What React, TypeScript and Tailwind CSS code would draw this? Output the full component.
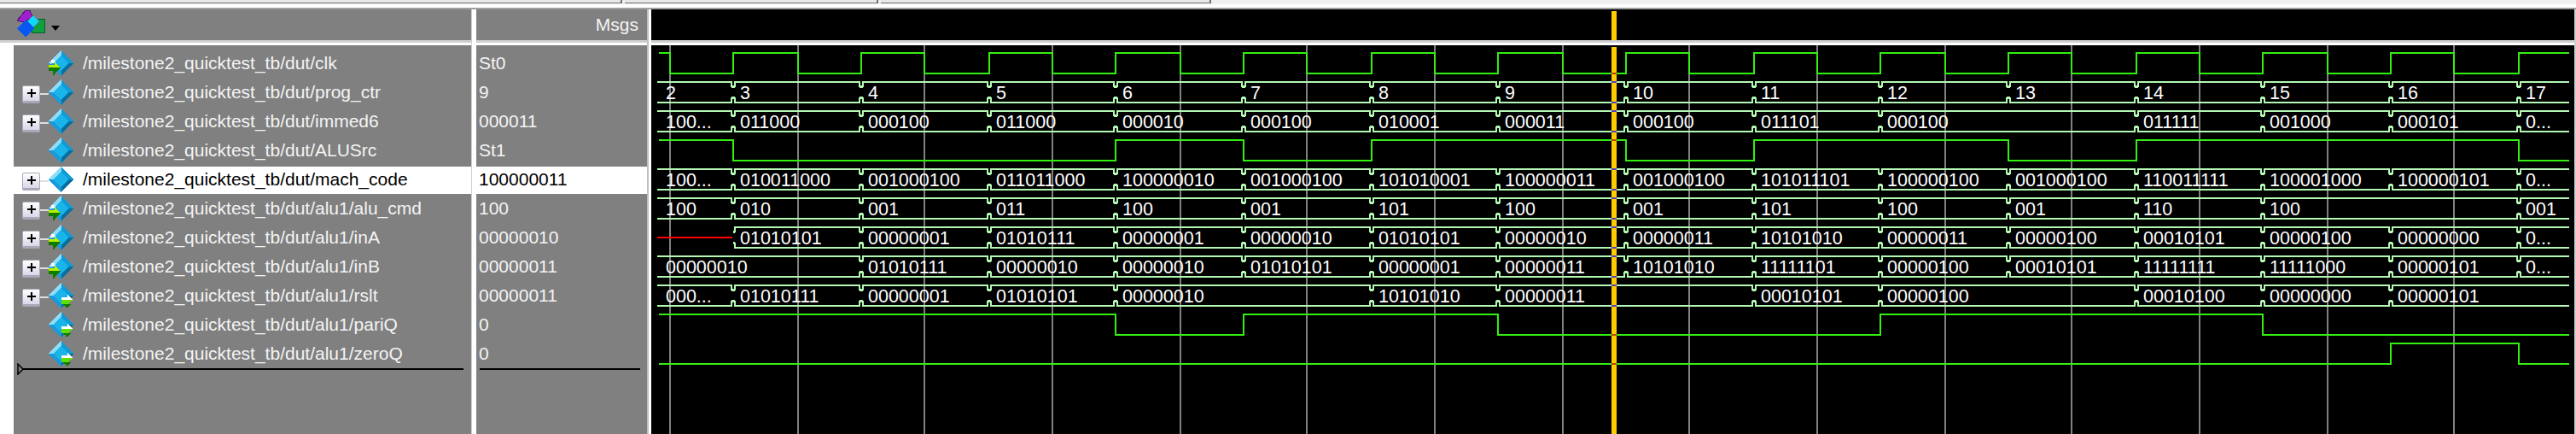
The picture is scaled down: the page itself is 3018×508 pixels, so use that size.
const edges = [770, 859, 1009, 1159, 1307, 1457, 1607, 1755, 1905, 2055, 2203, 2353, 2503, 2651, 2801, 2951, 3010];
const gridLines = [785, 935, 1083, 1233, 1383, 1531, 1681, 1831, 1979, 2129, 2279, 2427, 2577, 2727, 2875];
const rising = [859, 1009, 1159, 1307, 1457, 1607, 1755, 1905, 2055, 2203, 2353, 2503, 2651, 2801, 2951];

type Arrow = 'in' | 'out' | undefined;

interface Signal {
  name: string;
  value: string;
  expand?: boolean;
  arrow?: Arrow;
  selected?: boolean;
}

const signals: Signal[] = [
  { name: '/milestone2_quicktest_tb/dut/clk', value: 'St0', arrow: 'in' },
  { name: '/milestone2_quicktest_tb/dut/prog_ctr', value: '9', expand: true },
  { name: '/milestone2_quicktest_tb/dut/immed6', value: '000011', expand: true },
  { name: '/milestone2_quicktest_tb/dut/ALUSrc', value: 'St1' },
  { name: '/milestone2_quicktest_tb/dut/mach_code', value: '100000011', expand: true, selected: true },
  { name: '/milestone2_quicktest_tb/dut/alu1/alu_cmd', value: '100', expand: true, arrow: 'in' },
  { name: '/milestone2_quicktest_tb/dut/alu1/inA', value: '00000010', expand: true, arrow: 'in' },
  { name: '/milestone2_quicktest_tb/dut/alu1/inB', value: '00000011', expand: true, arrow: 'in' },
  { name: '/milestone2_quicktest_tb/dut/alu1/rslt', value: '00000011', expand: true, arrow: 'out' },
  { name: '/milestone2_quicktest_tb/dut/alu1/pariQ', value: '0', arrow: 'out' },
  { name: '/milestone2_quicktest_tb/dut/alu1/zeroQ', value: '0', arrow: 'out' },
];

// one label per clock period, null = value did not change
const buses: { center: number; labels: (string | null)[]; red?: boolean }[] = [
  { center: 108, labels: ['2', '3', '4', '5', '6', '7', '8', '9', '10', '11', '12', '13', '14', '15', '16', '17'] },
  { center: 142, labels: ['100...', '011000', '000100', '011000', '000010', '000100', '010001', '000011', '000100', '011101', '000100', null, '011111', '001000', '000101', '0...'] },
  { center: 210, labels: ['100...', '010011000', '001000100', '011011000', '100000010', '001000100', '101010001', '100000011', '001000100', '101011101', '100000100', '001000100', '110011111', '100001000', '100000101', '0...'] },
  { center: 244, labels: ['100', '010', '001', '011', '100', '001', '101', '100', '001', '101', '100', '001', '110', '100', null, '001'] },
  { center: 278, red: true, labels: ['', '01010101', '00000001', '01010111', '00000001', '00000010', '01010101', '00000010', '00000011', '10101010', '00000011', '00000100', '00010101', '00000100', '00000000', '0...'] },
  { center: 312, labels: ['00000010', null, '01010111', '00000010', '00000010', '01010101', '00000001', '00000011', '10101010', '11111101', '00000100', '00010101', '11111111', '11111000', '00000101', '0...'] },
  { center: 346, labels: ['000...', '01010111', '00000001', '01010101', '00000010', null, '10101010', '00000011', null, '00010101', '00000100', null, '00010100', '00000000', '00000101', null] },
];

const clkPoints = () => {
  const pts: string[] = ['772,62', '785,62', '785,86'];
  rising.forEach((r, i) => {
    pts.push(`${r},86`, `${r},62`);
    if (gridLines[i + 1]) pts.push(`${gridLines[i + 1]},62`, `${gridLines[i + 1]},86`);
  });
  pts.push('3010,62');
  return pts.join(' ');
};

// digital traces: starts high/low, toggles at the listed x
const trace = (hi: number, lo: number, startHigh: boolean, toggles: number[]) => {
  let high = startHigh;
  const pts = [`772,${high ? hi : lo}`];
  toggles.forEach((x) => {
    pts.push(`${x},${high ? hi : lo}`);
    high = !high;
    pts.push(`${x},${high ? hi : lo}`);
  });
  pts.push(`3010,${high ? hi : lo}`);
  return pts.join(' ');
};

const digital = [
  trace(164, 188, true, [859, 1307, 1457, 1607, 1905, 2055, 2353, 2503, 2951]),
  trace(368, 392, true, [1307, 1457, 1755, 2203, 2651]),
  trace(402, 426, false, [2801, 2951]),
];

function busPath(a: number, b: number, c: number, first: boolean, last: boolean) {
  const top = c - 12;
  const bot = c + 12;
  const x0 = first ? a : a + 2;
  const x1 = last ? b : b - 2;
  let d = '';
  // top line
  d += first ? `M${x0} ${top}` : `M${a + 1} ${top + 7}V${top + 5}H${x0}V${top}`;
  d += `H${x1}`;
  if (!last) d += `V${top + 5}H${b - 1}V${top + 7}`;
  // bottom line
  d += first ? `M${x0} ${bot}` : `M${a + 1} ${bot - 7}V${bot - 5}H${x0}V${bot}`;
  d += `H${x1}`;
  if (!last) d += `V${bot - 5}H${b - 1}V${bot - 7}`;
  return d;
}

function Waves() {
  return (
    <svg viewBox="763 53 2253 455" className="block w-[2253px] h-[455px]">
      {gridLines.map((x) => (
        <rect key={x} x={x - 1} y={53} width={2} height={455} className="fill-[#808080]" />
      ))}
      <polyline points={clkPoints()} fill="none" strokeWidth={2} shapeRendering="crispEdges" className="stroke-[#33ee11]" />
      {digital.map((p, i) => (
        <polyline key={i} points={p} fill="none" strokeWidth={2} shapeRendering="crispEdges" className="stroke-[#33ee11]" />
      ))}
      {buses.map((bus) => {
        const segs: { a: number; b: number; label: string; first: boolean; last: boolean }[] = [];
        bus.labels.forEach((label, i) => {
          if (label === null) {
            segs[segs.length - 1].b = edges[i + 1];
            segs[segs.length - 1].last = i === bus.labels.length - 1;
          } else {
            segs.push({ a: edges[i], b: edges[i + 1], label, first: i === 0, last: i === bus.labels.length - 1 });
          }
        });
        return (
          <g key={bus.center}>
            {segs.map((s) =>
              bus.red && s.first ? (
                <rect key={s.a} x={770} y={bus.center - 1} width={88} height={2} className="fill-[#ff0000]" />
              ) : (
                <path key={s.a} d={busPath(s.a, s.b, bus.center, s.first, s.last)} fill="none" strokeWidth={2} shapeRendering="crispEdges" className="stroke-[#b4f8b4]" />
              )
            )}
            {segs.map((s) => (
              <text key={s.a} x={s.first ? s.a + 10 : s.a + 8} y={bus.center + 8} className="fill-white text-[21.5px]">
                {s.label}
              </text>
            ))}
          </g>
        );
      })}
      {/* cursor */}
      <rect x={1888} y={55} width={6} height={453} className="fill-[#ffcc00]" />
      {[86, 164, 392, 426].map((y) => (
        <rect key={y} x={1888} y={y - 1} width={6} height={2} className="fill-[#c83a10]" />
      ))}
      {[96, 120, 130, 154, 198, 222, 232, 256, 266, 290, 300, 324, 334, 358].map((y) => (
        <rect key={y} x={1888} y={y - 1} width={6} height={2} className="fill-[#5a3cc0]" />
      ))}
    </svg>
  );
}

function SignalIcon({ arrow }: { arrow: Arrow }) {
  return (
    <svg viewBox="0 0 29 30" className="w-[29px] h-[30px] shrink-0" shapeRendering="crispEdges">
      <polygon points="14.5,0 14.5,15 0,15" fill="#8fdcf8" />
      <polygon points="14.5,0 29,15 14.5,15" fill="#0f9ad8" />
      <polygon points="0,15 14.5,15 14.5,30" fill="#1a9ad8" />
      <polygon points="29,15 14.5,15 14.5,30" fill="#08709e" />
      <polygon points="14.5,6 23,15 14.5,24 6,15" fill="#19b4ea" />
      {arrow === 'in' && (
        <g>
          <polygon points="3,16 3,11 7,11 8,14 0,16" fill="#ffffff" />
          <polygon points="0,17 7,17 7,14 14,20 0,20" fill="#b8f000" />
          <polygon points="0,20 14,20 7,27 7,29 5,29 5,24 0,24" fill="#0f7a00" />
        </g>
      )}
      {arrow === 'out' && (
        <g>
          <polygon points="15,17 22,17 22,14 29,20 15,20" fill="#ffffff" />
          <polygon points="15,20 29,20 22,25 15,25" fill="#60e000" />
          <polygon points="18,25 26,25 22,29 20,29 20,27 18,27" fill="#0f7a00" />
        </g>
      )}
    </svg>
  );
}

function Expander() {
  return (
    <div className="relative w-[21px] h-[21px] mt-[4px] shrink-0 rounded-[2px] border border-b-[3px] border-[#a8a8b8] bg-gradient-to-b from-white to-[#d8d8e8] flex items-center justify-center">
      <div className="absolute w-[10px] h-[2px] bg-black" />
      <div className="absolute w-[2px] h-[10px] bg-black" />
    </div>
  );
}

function HeaderIcon() {
  return (
    <svg viewBox="0 0 36 34" className="w-[36px] h-[34px]" shapeRendering="crispEdges">
      <polygon points="0,12 10,0 15,0 18,8 8,14" fill="#a020d0" stroke="#501070" strokeWidth={1} />
      <rect x="17" y="10" width="15" height="16" fill="#10a040" stroke="#086028" strokeWidth={1} />
      <polygon points="19,6 26,13 19,20 12,13" fill="#10d8f8" stroke="#5090a0" strokeWidth={1} />
      <polygon points="10,11 20,21 10,32 0,21" fill="#0858f0" />
    </svg>
  );
}

export default function App() {
  return (
    <div className="w-[3018px] h-[508px] overflow-hidden bg-white flex flex-col font-['Liberation_Sans',sans-serif] text-[21px]">
      {/* leftover toolbar edges */}
      <div className="h-[4px] flex shrink-0 bg-[#f0f0f0]">
        <div className="w-[729px] border-b border-[#707070] border-r-2 bg-[#e8e8e8]" />
        <div className="w-[3px]" />
        <div className="w-[297px] border-b border-[#707070] border-r-2 bg-[#e8e8e8]" />
        <div className="w-[3px]" />
        <div className="w-[387px] border-b border-[#707070] border-r-2 bg-[#e8e8e8]" />
      </div>
      <div className="h-[5px] shrink-0 border-t border-[#f0f0f0] bg-white" />

      <div className="flex-1 flex border-t-2 border-[#a0a0a0] min-h-0">
        {/* names */}
        <div className="w-[553px] shrink-0 flex flex-col border-r border-[#d0d0d0]">
          <div className="h-[36px] bg-[#808080] flex items-center pl-[20px] gap-[4px]">
            <HeaderIcon />
            <div className="mt-[8px] w-0 h-0 border-x-[5px] border-x-transparent border-t-[6px] border-t-black" />
          </div>
          <div className="h-[3px] bg-[#d0d0d0]" />
          <div className="h-[3px] bg-white" />
          <div className="flex-1 ml-[16px] bg-[#808080] pt-[4px]">
            {signals.map((s) => (
              <div
                key={s.name}
                className={`h-[34px] pl-[10px] flex items-center ${s.selected ? 'bg-white border-t-2 border-[#808080] pb-[2px] text-black' : 'text-[#f4f4f4]'}`}
              >
                {s.expand ? <Expander /> : <div className="w-[21px] shrink-0" />}
                <div className={`w-[10px] h-[2px] mt-[4px] shrink-0 ${s.expand ? 'bg-[#e0e0e0]' : ''}`} />
                <SignalIcon arrow={s.arrow} />
                <span className="ml-[11px] whitespace-nowrap">{s.name}</span>
              </div>
            ))}
            <div className="ml-[10px] mr-[9px] h-[2px] bg-black relative">
              <svg viewBox="0 0 8 14" className="absolute -left-[6px] -top-[6px] w-[8px] h-[14px]">
                <polygon points="1,1 7,7 1,13" fill="#808080" stroke="#000000" strokeWidth={1.5} />
              </svg>
            </div>
          </div>
        </div>
        <div className="w-[5px] shrink-0 bg-white" />

        {/* values */}
        <div className="w-[200px] shrink-0 flex flex-col">
          <div className="h-[36px] bg-[#808080] flex items-center justify-end pr-[10px] text-[#f4f4f4]">Msgs</div>
          <div className="h-[3px] bg-[#d0d0d0]" />
          <div className="h-[3px] bg-white" />
          <div className="flex-1 bg-[#808080] pt-[4px]">
            {signals.map((s) => (
              <div
                key={s.name}
                className={`h-[34px] pl-[3px] flex items-center ${s.selected ? 'bg-white border-t-2 border-[#808080] pb-[2px] text-black' : 'text-[#f4f4f4]'}`}
              >
                {s.value}
              </div>
            ))}
            <div className="ml-[4px] mr-[8px] h-[2px] bg-black" />
          </div>
        </div>
        <div className="w-[2px] shrink-0 bg-[#c0c0c0]" />
        <div className="w-[3px] shrink-0 bg-white" />

        {/* wave area */}
        <div className="w-[2253px] shrink-0 flex flex-col">
          <div className="h-[36px] bg-black relative">
            <div className="absolute left-[1125px] top-[2px] bottom-0 w-[6px] bg-[#ffcc00]" />
          </div>
          <div className="h-[3px] bg-[#d0d0d0]" />
          <div className="h-[3px] bg-white" />
          <div className="flex-1 bg-black">
            <Waves />
          </div>
        </div>
        <div className="flex-1 bg-[#d0d0d0]" />
      </div>
    </div>
  );
}
